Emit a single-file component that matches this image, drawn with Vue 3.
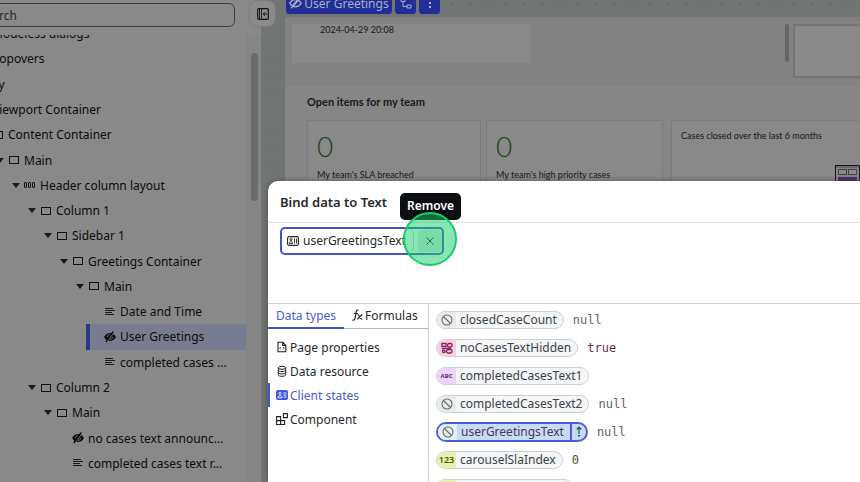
<script setup>
import { ref } from 'vue'

const query = ref('Search')

const tree = [
  { level: 2, icon: 'box', label: 'Modeless dialogs' },
  { level: 2, icon: 'box', label: 'Popovers' },
  { level: 1, icon: 'box', label: 'Body', open: true },
  { level: 2, icon: 'box', label: 'Viewport Container', open: true },
  { level: 3, icon: 'box', label: 'Content Container', open: true },
  { level: 4, icon: 'box', label: 'Main', open: true },
  { level: 5, icon: 'columns', label: 'Header column layout', open: true },
  { level: 6, icon: 'box', label: 'Column 1', open: true },
  { level: 7, icon: 'box', label: 'Sidebar 1', open: true },
  { level: 8, icon: 'box', label: 'Greetings Container', open: true },
  { level: 9, icon: 'box', label: 'Main', open: true },
  { level: 10, icon: 'text', label: 'Date and Time' },
  { level: 10, icon: 'hidden', label: 'User Greetings', selected: true },
  { level: 10, icon: 'text', label: 'completed cases ...' },
  { level: 6, icon: 'box', label: 'Column 2', open: true },
  { level: 7, icon: 'box', label: 'Main', open: true },
  { level: 8, icon: 'hidden', label: 'no cases text announc...' },
  { level: 8, icon: 'text', label: 'completed cases text r...' },
]

const sources = [
  { icon: 'page', label: 'Page properties' },
  { icon: 'data', label: 'Data resource' },
  { icon: 'state', label: 'Client states', active: true },
  { icon: 'component', label: 'Component' },
]

const states = [
  { type: 'none', name: 'closedCaseCount', value: 'null' },
  { type: 'bool', name: 'noCasesTextHidden', value: 'true' },
  { type: 'abc', name: 'completedCasesText1', value: '' },
  { type: 'none', name: 'completedCasesText2', value: 'null' },
  { type: 'none', name: 'userGreetingsText', value: 'null', selected: true },
  { type: 'num', name: 'carouselSlaIndex', value: '0' },
  { type: 'num', name: 'carouselHighIndex', value: '0' },
]
</script>

<template>
  <div class="app">
    <aside class="sidebar">
      <div class="search">
        <input v-model="query" type="text" aria-label="Search" />
      </div>
      <div class="outline">
        <div class="tree-clip">
          <ul class="tree">
            <li
              v-for="(n, i) in tree"
              :key="i"
              class="node"
              :class="{ selected: n.selected }"
              :style="{ marginLeft: n.level * 16 + 'px' }"
            >
              <span class="arrow" :class="{ open: n.open }"></span>
              <svg class="node-icon" width="12" height="12" viewBox="0 0 12 12" aria-hidden="true">
                <rect v-if="n.icon === 'box'" x="1.5" y="2.5" width="9" height="7" fill="none" stroke="#111" />
                <g v-else-if="n.icon === 'columns'" fill="none" stroke="#111">
                  <rect x="0.5" y="3.5" width="2" height="5" rx=".5" />
                  <rect x="4.5" y="3.5" width="2" height="5" rx=".5" />
                  <rect x="8.5" y="3.5" width="2" height="5" rx=".5" />
                </g>
                <path v-else-if="n.icon === 'text'" d="M1 2.500h8M1 4.500h10M1 6.500h7M1 8.500h9" stroke="#1c1c1c" fill="none" />
                <g v-else>
                  <path d="M0 6C2 2.800 4 2 6 2s4 .8 6 4c-2 3.200-4 4-6 4S2 9.200 0 6z" fill="#0c0c0c" />
                  <path d="M3.300 6.200c0-1.600 1-2.700 2.500-2.700M8.600 5.800c0 1.600-1 2.600-2.400 2.700" fill="none" stroke="#888" stroke-width=".8" />
                  <path d="M2.800 11.500L10.300 .8" stroke="#888" stroke-width="1" />
                  <path d="M1.800 11L9.300 .5" stroke="#0c0c0c" stroke-width="1.300" />
                </g>
              </svg>
              <span class="node-label">{{ n.label }}</span>
            </li>
          </ul>
        </div>
        <div class="track"><div class="thumb"></div></div>
      </div>
      <button class="collapse" type="button" aria-label="Collapse panel">
        <svg width="12" height="12" viewBox="0 0 12 12" fill="none" stroke="#151515">
          <rect x=".7" y=".7" width="10.600" height="10.600" rx="1" stroke-width="1.200" />
          <path d="M2.500 1v10M4.500 1v10" stroke-width=".9" />
          <path d="M10 6H6.300M8 4.200L6.200 6 8 7.800" />
        </svg>
      </button>
    </aside>

    <main class="canvas">
      <div class="toolbar">
        <button class="tool name" type="button">
          <svg width="13" height="12" viewBox="0 0 13 12" fill="none" stroke="#a9aecb">
            <path d="M.8 6.200C2.600 3.400 4.500 2.500 6.500 2.500s4 .9 5.700 3.700c-1.700 2.800-3.700 3.600-5.700 3.600S2.600 9 .8 6.200z" stroke-width="1.300" />
            <path d="M4.300 8.300L8.800 3.500" stroke-width="2" />
            <path d="M2 11.300L10.700 .7" stroke-width="1.300" />
          </svg>
          User Greetings
        </button>
        <button class="tool" type="button" aria-label="Show structure">
          <svg width="12" height="12" viewBox="0 0 12 12" fill="none" stroke="#a9aecb">
            <path d="M1 1.500h4v3H1zM3 4.500v5h4M7 8h4v3H7z" />
          </svg>
        </button>
        <button class="tool" type="button" aria-label="More">
          <svg width="4" height="12" viewBox="0 0 4 12" fill="#a9aecb">
            <rect x="1" y="1" width="2" height="2" /><rect x="1" y="5" width="2" height="2" /><rect x="1" y="9" width="2" height="2" />
          </svg>
        </button>
      </div>
      <div class="page">
        <section class="hero">
          <div class="greeting">2024-04-29 20:08</div>
          <div class="hero-side">
            <div class="mini-thumb"></div>
            <div class="blank"></div>
          </div>
        </section>
        <section class="team">
          <h2>Open items for my team</h2>
          <div class="cards">
            <article class="card"><strong>0</strong><p>My team's SLA breached</p></article>
            <article class="card"><strong>0</strong><p>My team's high priority cases</p></article>
            <article class="card chart">
              <p>Cases closed over the last 6 months</p>
              <svg width="25" height="34" viewBox="0 0 25 34">
                <rect x=".5" y=".5" width="24" height="33" fill="#858388" stroke="#17171c" />
                <path d="M1 2h23" stroke="#55515f" />
                <rect x="3.500" y="4.500" width="8" height="5" fill="#898989" stroke="#444" />
                <rect x="13.500" y="4.500" width="8" height="5" fill="#898989" stroke="#444" />
                <rect x="3" y="12" width="19" height="20" fill="#4d3270" />
              </svg>
            </article>
          </div>
        </section>
      </div>
    </main>

    <section class="dialog" role="dialog" aria-labelledby="dialog-title">
      <header><h1 id="dialog-title">Bind data to Text</h1></header>
      <div class="expression">
        <div class="token">
          <svg width="12" height="10" viewBox="0 0 12 10" fill="none" stroke="#222">
            <rect x=".6" y=".6" width="10.800" height="8.800" rx="1.500" stroke-width="1.100" />
            <circle cx="4" cy="3.500" r="1" /><path d="M2.300 7.500c0-2.500 3.400-2.500 3.400 0zM7.500 2.500v5M9.500 2.500v5" stroke-width=".9" />
          </svg>
          <span class="token-name">userGreetingsText</span>
          <button class="remove" type="button" aria-label="Remove">
            <svg width="8" height="8" viewBox="0 0 8 8" stroke="#222" fill="none"><path d="M.5 .5l7 7M7.500 .5l-7 7" /></svg>
          </button>
          <span class="halo"></span>
          <span class="tooltip" role="tooltip">Remove</span>
        </div>
      </div>
      <div class="picker">
        <nav class="left">
          <div class="tabs">
            <button class="tab active" type="button">Data types</button>
            <button class="tab" type="button">
              <svg width="11" height="12" viewBox="0 0 11 12" fill="none" stroke="#222" stroke-width="1.200">
                <path d="M6.500 1.200C4.600 .4 4.300 2 4 4L3 9.300C2.700 11 1.700 11.500 .5 10.900M1.800 4.500h4M5.500 5.500c2 0 2 5 4.800 4.700M10.200 5.500L5.300 10.300" />
              </svg>
              Formulas
            </button>
          </div>
          <ul class="sources">
            <li v-for="s in sources" :key="s.label" :class="{ active: s.active }">
              <button type="button">
                <svg width="12" height="12" viewBox="0 0 12 12" fill="none" stroke="#222" aria-hidden="true">
                  <g v-if="s.icon === 'page'">
                    <path d="M2 1.200h4.800l3 3v6.600H2zM6.600 1.200v3.200h3.200" stroke-width="1.100" />
                    <path d="M4.800 6L3.700 7.200l1.100 1.200M7.200 6l1.100 1.200-1.100 1.200" stroke-width=".9" />
                  </g>
                  <g v-else-if="s.icon === 'data'">
                    <ellipse cx="6" cy="2.800" rx="3.700" ry="1.500" />
                    <path d="M2.300 2.800v7c0 2 7.400 2 7.400 0v-7M2.300 5.100c0 2 7.400 2 7.400 0M2.300 7.400c0 2 7.400 2 7.400 0" />
                  </g>
                  <g v-else-if="s.icon === 'state'">
                    <rect x="0" y="1" width="12" height="10" rx="2" fill="#3e57dc" stroke="none" />
                    <circle cx="4" cy="4.300" r="1.100" stroke="#fff" stroke-width=".9" />
                    <path d="M2 8.800c0-3 4-3 4 0zM7.500 4h3M7.500 6h3M7.500 8h3" stroke="#fff" stroke-width=".9" />
                  </g>
                  <g v-else>
                    <path d="M.6 3.600h4v4h4v4h-8zM.6 7.600h4v4M7.400 .6h4v4h-4z" stroke-width="1.100" />
                  </g>
                </svg>
                {{ s.label }}
              </button>
            </li>
          </ul>
        </nav>
        <ul class="states">
          <li v-for="s in states" :key="s.name">
            <button class="pill" :class="{ selected: s.selected }" type="button">
              <span class="kind" :class="s.type">
                <svg v-if="s.type === 'none'" width="12" height="12" viewBox="0 0 12 12" fill="none" stroke="#626b70">
                  <circle cx="6" cy="6" r="5" stroke-width="1.100" /><path d="M2.500 2.500l7 7" stroke-width="1.100" />
                </svg>
                <svg v-else-if="s.type === 'bool'" width="12" height="12" viewBox="0 0 12 12" fill="none" stroke="#86205a" stroke-width="1.300">
                  <rect x="1" y="1.500" width="4" height="3" /><rect x="6.500" y="1.500" width="4.500" height="3.500" rx="1.500" />
                  <rect x="1.500" y="8" width="2.500" height="2.500" rx="1" /><rect x="5.500" y="7.500" width="5.500" height="3.500" rx="1.700" />
                  <path d="M1 6.300h9" />
                </svg>
                <span v-else-if="s.type === 'abc'">ABC</span>
                <span v-else>123</span>
              </span>
              <span class="pill-name">{{ s.name }}</span>
              <span v-if="s.selected" class="insert">
                <svg width="8" height="12" viewBox="0 0 8 12" fill="none" stroke="#17664f">
                  <path d="M4 1v7M1.800 3.500L4 1.200l2.200 2.300" stroke-width="1.300" /><path d="M2.300 9L4 11l1.700-2z" fill="#17664f" stroke="none" />
                </svg>
              </span>
            </button>
            <code :class="s.type">{{ s.value }}</code>
          </li>
        </ul>
      </div>
    </section>
  </div>
</template>

<style>
body {
  margin: 0;
  overflow: hidden;
}
</style>

<style scoped>
* {
  box-sizing: border-box;
}
ul, p, h1, h2 {
  margin: 0;
  padding: 0;
  list-style: none;
}
button {
  font: inherit;
  color: inherit;
  border: 0;
  padding: 0;
  background: none;
  white-space: nowrap;
}
svg {
  flex: none;
  display: block;
}
.app {
  position: relative;
  display: flex;
  height: 100vh;
  overflow: hidden;
  font-family: "Noto Sans", sans-serif;
  font-size: 12px;
  color: #0c0c0c;
}
.sidebar {
  position: relative;
  display: flex;
  flex-direction: column;
  flex: none;
  width: 261px;
  background: #898989;
}
.search {
  height: 35px;
  padding: 3px 26px 0 0;
}
.search input {
  display: block;
  width: calc(100% + 40px);
  height: 24px;
  margin-left: -40px;
  padding: 0 0 0 18px;
  border: 1px solid #3c3c40;
  border-radius: 6px;
  background: transparent;
  font: inherit;
  color: #2b2b2b;
}
.outline {
  display: flex;
  flex: 1;
  min-height: 0;
}
.tree-clip {
  display: flex;
  flex: 1;
  min-width: 0;
  overflow: hidden;
}
.tree {
  display: grid;
  grid-auto-rows: 1fr;
  flex: 1;
  margin: -14px 0 6px -74px;
}
.node {
  display: flex;
  align-items: center;
  gap: 4px;
  padding-left: 6px;
  white-space: nowrap;
}
.node.selected {
  padding-left: 2px;
  border-left: 4px solid #2b3787;
  background: #787c91;
}
.arrow {
  width: 8px;
  flex: none;
}
.arrow.open {
  border: 4px solid transparent;
  border-top: 5px solid #1c1c1c;
  border-bottom: 0;
}
.track {
  width: 15px;
  padding: 18px 3px 0 4px;
  background: #868687;
  border-left: 1px solid #828283;
}
.thumb {
  height: 148px;
  border-radius: 4px;
  background: #6b6b6c;
}
.collapse {
  position: absolute;
  z-index: 1;
  top: 1px;
  right: -14px;
  display: grid;
  place-items: center;
  width: 25px;
  height: 25px;
  border-radius: 7px;
  background: #8a8a8a;
  box-shadow: 0 0 1px 1px #7c7c7c;
}
.canvas {
  flex: 1;
  min-width: 0;
  padding-left: 24px;
  background: radial-gradient(circle, #666a69 1px, transparent 1px) 2px -5px / 18px 18px #717574;
}
.toolbar {
  display: flex;
  align-items: flex-end;
  gap: 3px;
  height: 17px;
  padding: 0 0 3px 1px;
}
.tool {
  display: flex;
  align-items: center;
  justify-content: center;
  gap: 2px;
  width: 21px;
  height: 22px;
  border-radius: 3px;
  background: #222e97;
  color: #a9aecb;
}
.tool.name {
  width: 106px;
}
.page {
  font-family: Lato, sans-serif;
  color: #18181c;
}
.hero {
  display: flex;
  justify-content: space-between;
  height: 69px;
  padding: 7px 0 0 7px;
  background: #828283;
}
.greeting {
  width: 238px;
  height: 39px;
  padding-left: 28px;
  font-size: 9px;
  line-height: 12px;
  background: #898989;
}
.hero-side {
  display: flex;
  gap: 4px;
  width: 75px;
}
.mini-thumb {
  width: 4px;
  height: 38px;
  border-radius: 2px;
  background: #666;
}
.blank {
  flex: 1;
  height: 54px;
  border: 2px solid #747475;
  border-right: 0;
  background: #898989;
}
.team {
  height: 100vh;
  padding: 9px 0 0 22px;
  background: #868686;
}
.team h2 {
  font-size: 11px;
  line-height: 14px;
}
.cards {
  display: grid;
  grid-template-columns: 174px 177px 1fr;
  gap: 5px;
  margin-top: 11px;
}
.card {
  height: 110px;
  padding: 9px;
  border: 1px solid #7b7b7b;
  border-radius: 2px;
  background: #898989;
  font-size: 9px;
}
.card strong {
  display: block;
  font-size: 28px;
  line-height: 32px;
  font-weight: 300;
  color: #1c441c;
}
.card p {
  line-height: 12px;
}
.card strong + p {
  margin-top: 7px;
}
.chart {
  margin-left: 3px;
  padding-right: 0;
  border-right: 0;
}
.chart svg {
  margin: 23px 0 0 auto;
}
.dialog {
  position: absolute;
  inset: 181px 0 0 268px;
  display: flex;
  flex-direction: column;
  border-radius: 10px 0 0 0;
  background: #fff;
  box-shadow: 0 0 6px rgba(0, 0, 0, 0.35);
  color: #26292e;
}
.dialog header {
  padding: 11px 12px 10px;
  border-bottom: 1px solid #dde0e2;
}
.dialog h1 {
  font-size: 13px;
  font-weight: 600;
  line-height: 20px;
}
.expression {
  height: 80px;
  padding: 4px 12px;
}
.token {
  position: relative;
  z-index: 0;
  display: flex;
  align-items: center;
  gap: 4px;
  width: 164px;
  height: 28px;
  padding-left: 5px;
  border: 2px solid #4454bd;
  border-radius: 5px;
}
.token-name {
  flex: 1;
  line-height: 22px;
  border-right: 1px solid #c5cacd;
  border-radius: 0 5px 5px 0;
}
.remove {
  display: grid;
  place-items: center;
  width: 24px;
  height: 22px;
  border-radius: 4px;
  background: #e4e7e7;
}
.halo {
  position: absolute;
  top: -17px;
  right: -15px;
  width: 54px;
  height: 54px;
  border: 2px solid #14ce68;
  border-radius: 50%;
  background: rgba(20, 206, 104, 0.5);
}
.tooltip {
  position: absolute;
  z-index: -1;
  top: -36px;
  right: -19px;
  padding: 3px 7px 4px;
  border-radius: 5px;
  background: #0c0e12;
  color: #fff;
  font-weight: 600;
  line-height: 20px;
}
.picker {
  display: flex;
  flex: 1;
  min-height: 0;
  border-top: 1px solid #cdd1d3;
}
.left {
  width: 161px;
  flex: none;
  border-right: 1px solid #cdd1d3;
}
.tabs {
  display: flex;
  height: 25px;
  border-bottom: 1px solid #b4b8bc;
}
.tab {
  display: flex;
  align-items: center;
  gap: 2px;
  height: 25px;
  padding: 0 8px 1px;
  border-bottom: 2px solid transparent;
}
.tab.active {
  color: #4a5cd0;
  border-color: #4454bd;
}
.sources {
  padding-top: 6px;
}
.sources li {
  height: 24px;
  border-left: 2px solid transparent;
}
.sources li.active {
  border-color: #3e57dc;
  color: #4a5cd0;
}
.sources button {
  display: flex;
  align-items: center;
  gap: 2px;
  height: 24px;
  padding-left: 6px;
}
.states {
  display: flex;
  flex-direction: column;
  flex: 1;
  padding: 2px 0 0 7px;
}
.states li {
  display: flex;
  align-items: center;
  gap: 9px;
  flex: none;
  height: 28px;
}
.pill {
  display: flex;
  align-items: stretch;
  height: 18px;
  border: 1px solid #cdd1d3;
  border-radius: 9px;
  background: #f4f6f7;
  overflow: hidden;
  color: #3b4146;
  line-height: 16px;
}
.kind {
  display: grid;
  place-items: center;
  width: 19px;
  background: #e9eced;
}
.kind.bool {
  background: #f7cfe5;
  color: #86205a;
}
.kind.abc {
  background: #ecd5f8;
  color: #5c2b85;
  font-size: 6px;
  font-weight: 700;
}
.kind.num {
  background: #e6f2ae;
  color: #48560f;
  font-size: 9px;
  font-weight: 600;
}
.pill-name {
  padding: 0 6px 0 4px;
}
.pill.selected {
  height: 20px;
  border: 2px solid #4560dd;
  border-radius: 10px;
  background: #ccd8f8;
}
.insert {
  display: grid;
  place-items: center;
  width: 16px;
  border-left: 2px solid #4560dd;
}
code {
  font-family: "DejaVu Sans Mono", monospace;
  font-size: 12px;
  color: #60656a;
}
code.bool {
  color: #7a1f52;
}
code.num {
  color: #48560f;
}
</style>
